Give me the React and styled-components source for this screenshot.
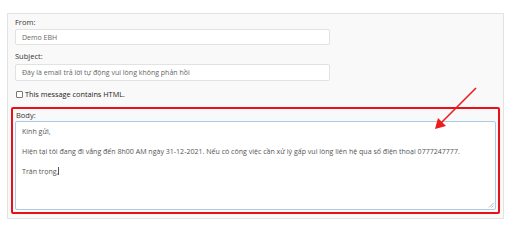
import React from "react";
import styled, { createGlobalStyle } from "styled-components";

const Global = createGlobalStyle`
  html, body { margin: 0; padding: 0; background: #fff; }
  body { font-family: "Open Sans", "Liberation Sans", sans-serif; }
`;

const Page = styled.div`
  position: relative;
  width: 512px;
  height: 231px;
  padding: 13px 0 0 7px;
  box-sizing: border-box;
`;

const Panel = styled.div`
  width: 497px;
  height: 206px;
  box-sizing: border-box;
  background: #f9f9f9;
  border: 1px solid #e3e3e3;
  padding: 3px 3px 4px 3px;
  display: flex;
  flex-direction: column;
`;

const Field = styled.div`
  padding-left: 4px;
  display: flex;
  flex-direction: column;
  margin-bottom: ${(p) => p.$mb || 0}px;
`;

const Label = styled.div`
  font-size: 7.5px;
  line-height: 11px;
  color: #333;
  height: 11px;
  margin-bottom: ${(p) => p.$mb || 0}px;
`;

const Input = styled.div`
  width: 315px;
  height: ${(p) => p.$h}px;
  box-sizing: border-box;
  background: #fff;
  border: 1px solid #e2e2e2;
  border-radius: 2px;
  padding-left: 6px;
  font-size: 7px;
  color: #666;
  display: flex;
  align-items: center;
`;

const CheckRow = styled.label`
  display: flex;
  align-items: center;
  gap: 2px;
  padding-left: 5px;
  height: 12px;
  margin-bottom: 7px;
  font-size: 7.3px;
  font-weight: 500;
  color: #222;
`;

const Box = styled.span`
  width: 5px;
  height: 5px;
  border: 1px solid #777;
  border-radius: 1px;
  background: #fff;
`;

const BodyBox = styled.div`
  flex: 1;
  border: 2px solid #e8111a;
  border-radius: 2px;
  padding: 1px 2px 2px 2px;
  display: flex;
  flex-direction: column;
`;

const BodyLabel = styled.div`
  font-size: 7.5px;
  line-height: 10px;
  height: 11px;
  color: #333;
  padding-left: 1px;
`;

const TextArea = styled.div`
  position: relative;
  flex: 1;
  background: #fff;
  border: 1px solid #a8cbea;
  border-radius: 2px;
  padding: 4px 6px;
  font-size: 7.05px;
  line-height: 10px;
  color: #555;
  white-space: pre;
`;

const Caret = styled.span`
  display: inline-block;
  width: 1px;
  height: 8px;
  background: #555;
  vertical-align: -1px;
`;

const Grip = styled.svg`
  position: absolute;
  right: 1px;
  bottom: 1px;
`;

const Arrow = styled.svg`
  position: absolute;
  left: 0;
  top: 0;
  pointer-events: none;
`;

export default function App() {
  return (
    <>
      <Global />
      <Page>
        <Panel>
          <Field $mb={6}>
            <Label $mb={1}>From:</Label>
            <Input $h={16}>Demo EBH</Input>
          </Field>
          <Field $mb={7}>
            <Label $mb={2}>Subject:</Label>
            <Input $h={17}>Đây là email trả lời tự động vui lòng không phản hồi</Input>
          </Field>
          <CheckRow>
            <Box />
            This message contains HTML.
          </CheckRow>
          <BodyBox>
            <BodyLabel>Body:</BodyLabel>
            <TextArea>
              {"Kính gửi,\n\nHiện tại tôi đang đi vắng đến 8h00 AM ngày 31-12-2021. Nếu có công việc cần xử lý gấp vui lòng liên hệ qua số điện thoại 0777247777.\n\nTrân trọng,"}
              <Caret />
              <Grip width="6" height="6" viewBox="0 0 6 6">
                <path d="M5.5 1 L1 5.5 M5.5 3.5 L3.5 5.5" stroke="#999" strokeWidth="0.7" />
              </Grip>
            </TextArea>
          </BodyBox>
        </Panel>
        <Arrow width="512" height="231" viewBox="0 0 512 231">
          <line x1="476" y1="88" x2="441" y2="123" stroke="#ee1c1c" strokeWidth="1.6" />
          <polygon points="435,129 438,118 446,126" fill="#ee1c1c" />
        </Arrow>
      </Page>
    </>
  );
}
